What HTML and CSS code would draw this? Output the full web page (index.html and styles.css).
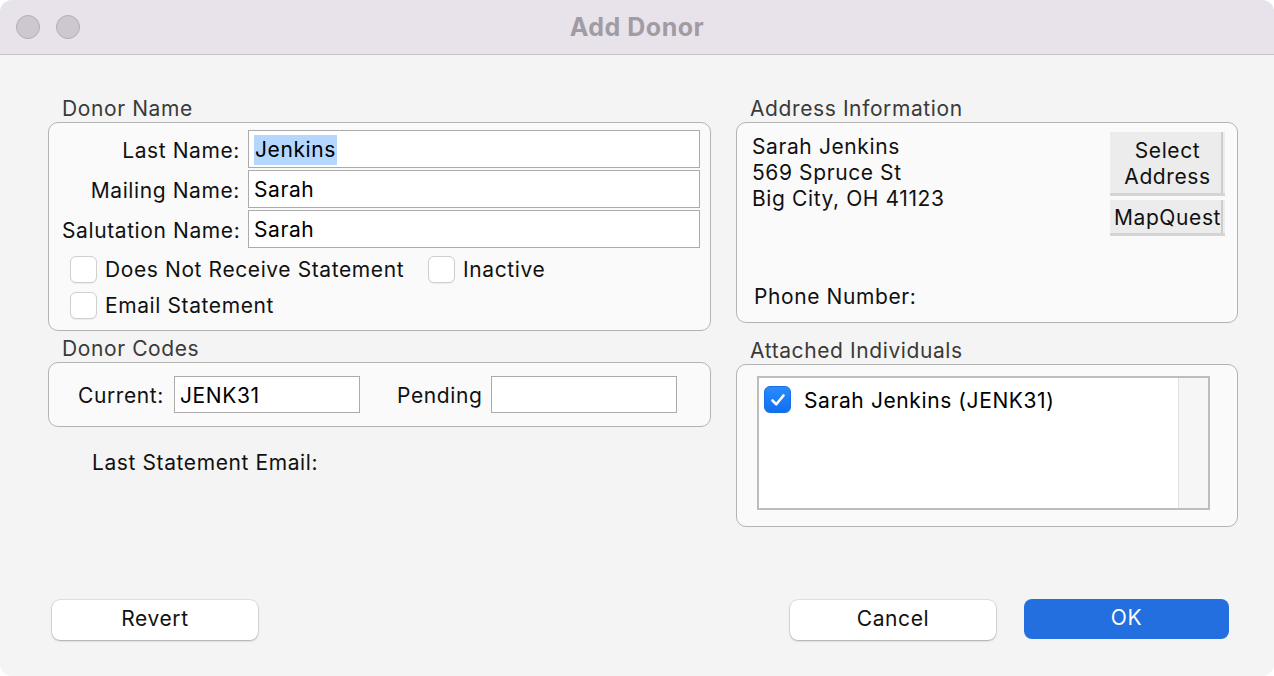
FILE: index.html
```html
<!DOCTYPE html>
<html lang="en">
<head>
<meta charset="UTF-8">
<title>Add Donor</title>
<link rel="stylesheet" href="styles.css">
</head>
<body>

<div class="window">
  <!-- title bar -->
  <header class="titlebar">
    <div class="lights">
      <span class="light"></span>
      <span class="light"></span>
    </div>
    <div class="title">Add Donor</div>
    <div></div>
  </header>

  <main class="content">
    <div class="columns">
      <!-- left side -->
      <section class="col-left">
        <div class="group-title">Donor Name</div>
        <div class="group name-group">
          <div class="field-grid">
            <span class="field-label">Last Name:</span>
            <div class="input"><span class="selected">Jenkins</span></div>
            <span class="field-label">Mailing Name:</span>
            <div class="input">Sarah</div>
            <span class="field-label">Salutation Name:</span>
            <div class="input">Sarah</div>
          </div>
          <div class="check-row first">
            <label class="check wide"><span class="box"></span>Does Not Receive Statement</label>
            <label class="check"><span class="box"></span>Inactive</label>
          </div>
          <div class="check-row">
            <label class="check"><span class="box"></span>Email Statement</label>
          </div>
        </div>

        <div class="group-title codes-title">Donor Codes</div>
        <div class="group codes-group">
          <span class="code-label">Current:</span>
          <div class="input code">JENK31</div>
          <span class="code-label pending">Pending</span>
          <div class="input code"></div>
        </div>

        <div class="last-email">Last Statement Email:</div>
      </section>

      <!-- right side -->
      <section class="col-right">
        <div class="group-title">Address Information</div>
        <div class="group address-group">
          <div class="address-top">
            <div class="address-lines">
              Sarah Jenkins<br>
              569 Spruce St<br>
              Big City, OH 41123
            </div>
            <div class="address-buttons">
              <button class="flat-btn tall">Select<br>Address</button>
              <button class="flat-btn">MapQuest</button>
            </div>
          </div>
          <div class="phone">Phone Number:</div>
        </div>

        <div class="group-title attached-title">Attached Individuals</div>
        <div class="group attached-group">
          <div class="listbox">
            <div class="list-items">
              <div class="list-row">
                <span class="box checked">
                  <svg width="18" height="18" viewBox="0 0 18 18"><path d="M3.5 9.5 L7.3 13.3 L14.5 4.5" fill="none" stroke="#fff" stroke-width="2.6" stroke-linecap="round" stroke-linejoin="round"/></svg>
                </span>
                <span class="list-text">Sarah Jenkins (JENK31)</span>
              </div>
            </div>
            <div class="scroll-track"></div>
          </div>
        </div>
      </section>
    </div>

    <footer class="buttons">
      <button class="btn">Revert</button>
      <div class="spacer"></div>
      <button class="btn">Cancel</button>
      <button class="btn primary">OK</button>
    </footer>
  </main>
</div>

</body>
</html>
```

FILE: styles.css
```css
body {
  margin: 0;
  background: #fff;
  font-family: Inter, "Liberation Sans", sans-serif;
  font-size: 21px;
  letter-spacing: 0.6px;
  color: #111;
}

.window {
  width: 1274px;
  height: 676px;
  box-sizing: border-box;
  border-radius: 12px;
  overflow: hidden;
  background: #f4f4f4;
  display: flex;
  flex-direction: column;
}

/* title bar */
.titlebar {
  height: 54px;
  flex: none;
  background: #e8e3ea;
  border-bottom: 1px solid #c9c4cb;
  display: grid;
  grid-template-columns: 1fr auto 1fr;
  align-items: center;
}

.lights {
  display: flex;
  gap: 16px;
  padding-left: 16px;
}

.light {
  width: 22px;
  height: 22px;
  border-radius: 50%;
  background: #cdc8cf;
  border: 1px solid #b3aeb5;
}

.title {
  font-weight: 700;
  font-size: 25px;
  letter-spacing: 0.5px;
  color: #a19ca4;
}

/* main area */
.content {
  flex: 1;
  display: flex;
  flex-direction: column;
  padding: 41px 45px 35px 48px;
}

.columns {
  display: grid;
  grid-template-columns: 663px 502px;
  column-gap: 25px;
}

.group-title {
  height: 24px;
  line-height: 26px;
  color: #3a3a3a;
  padding-left: 14px;
  margin-bottom: 2px;
}

.group {
  border: 1px solid #b3b3b3;
  border-radius: 10px;
  background: #fafafa;
}

.input {
  background: #fff;
  border: 1px solid #ababab;
  box-sizing: border-box;
  height: 38px;
  line-height: 38px;
  padding-left: 5px;
  color: #000;
  white-space: nowrap;
  overflow: hidden;
}

.selected {
  background: #b3d7ff;
  padding: 2px 1px 3px;
}

/* donor name */
.name-group {
  padding: 7px 10px 11px 13px;
}

.field-grid {
  display: grid;
  grid-template-columns: 178px 1fr;
  column-gap: 8px;
  row-gap: 2px;
  align-items: center;
}

.field-label {
  text-align: right;
  white-space: nowrap;
  padding-top: 2px;
}

.check-row {
  display: flex;
  align-items: center;
  height: 27px;
  padding-left: 8px;
  margin-top: 9px;
}

.check-row.first {
  margin-top: 8px;
}

.check {
  display: flex;
  align-items: center;
  gap: 8px;
  white-space: nowrap;
  line-height: 29px;
}

.check.wide {
  width: 358px;
}

.box {
  width: 27px;
  height: 27px;
  box-sizing: border-box;
  border-radius: 6px;
  border: 1px solid #cfcfcf;
  background: #fff;
  box-shadow: 0 1px 1px rgba(0,0,0,0.06);
  flex: none;
}

.box.checked {
  background: linear-gradient(#2a8bff, #0f6ff0);
  border-color: #1670e8;
  display: flex;
  align-items: center;
  justify-content: center;
}

/* donor codes */
.codes-title {
  margin-top: 5px;
}

.codes-group {
  display: flex;
  align-items: center;
  padding: 13px 0 13px 29px;
}

.code-label {
  width: 96px;
  flex: none;
  padding-top: 2px;
}

.code-label.pending {
  width: 94px;
  margin-left: 37px;
}

.input.code {
  width: 186px;
  height: 37px;
  line-height: 37px;
}

.last-email {
  margin-top: 23px;
  padding-left: 44px;
  height: 24px;
  line-height: 26px;
}

/* address */
.address-group {
  height: 201px;
  box-sizing: border-box;
  display: flex;
  flex-direction: column;
  padding: 9px 12px 14px 15px;
}

.address-top {
  display: flex;
  justify-content: space-between;
}

.address-lines {
  margin-top: 2px;
  line-height: 26px;
}

.address-buttons {
  display: flex;
  flex-direction: column;
  gap: 4px;
}

.flat-btn {
  width: 115px;
  height: 36px;
  font: inherit;
  letter-spacing: inherit;
  color: #111;
  line-height: 26px;
  padding: 2px 0 0;
  border: none;
  border-bottom: 3px solid #d5d5d5;
  background: #ececec;
  box-shadow: inset -2px 0 0 #ececec, inset -4px 0 0 #cdcdcd;
}

.flat-btn.tall {
  height: 64px;
}

.phone {
  margin-top: auto;
  padding-left: 2px;
  height: 24px;
  line-height: 26px;
}

/* attached individuals */
.attached-title {
  margin-top: 15px;
}

.attached-group {
  padding: 11px 27px 16px 20px;
}

.listbox {
  height: 134px;
  box-sizing: border-box;
  border: 2px solid #bdbdbd;
  background: #fff;
  display: flex;
}

.list-items {
  flex: 1;
  padding: 8px 5px;
}

.list-row {
  display: flex;
  align-items: center;
  gap: 13px;
  color: #000;
}

.list-text {
  padding-top: 2px;
}

.scroll-track {
  width: 29px;
  border-left: 1px solid #e1e1e1;
  background: #f6f6f6;
}

/* bottom buttons */
.buttons {
  margin-top: auto;
  display: flex;
  align-items: center;
  padding-left: 4px;
  gap: 28px;
}

.spacer {
  flex: 1;
}

.btn {
  width: 206px;
  height: 40px;
  font: inherit;
  letter-spacing: inherit;
  color: #111;
  background: #fff;
  border: none;
  border-radius: 8px;
  padding: 0 0 3px;
  box-shadow: 0 0 0 0.5px rgba(0,0,0,0.15), 0 1px 2px rgba(0,0,0,0.25);
}

.btn.primary {
  width: 205px;
  color: #fff;
  background: #246fe0;
  box-shadow: none;
  margin-bottom: 2px;
}
```
